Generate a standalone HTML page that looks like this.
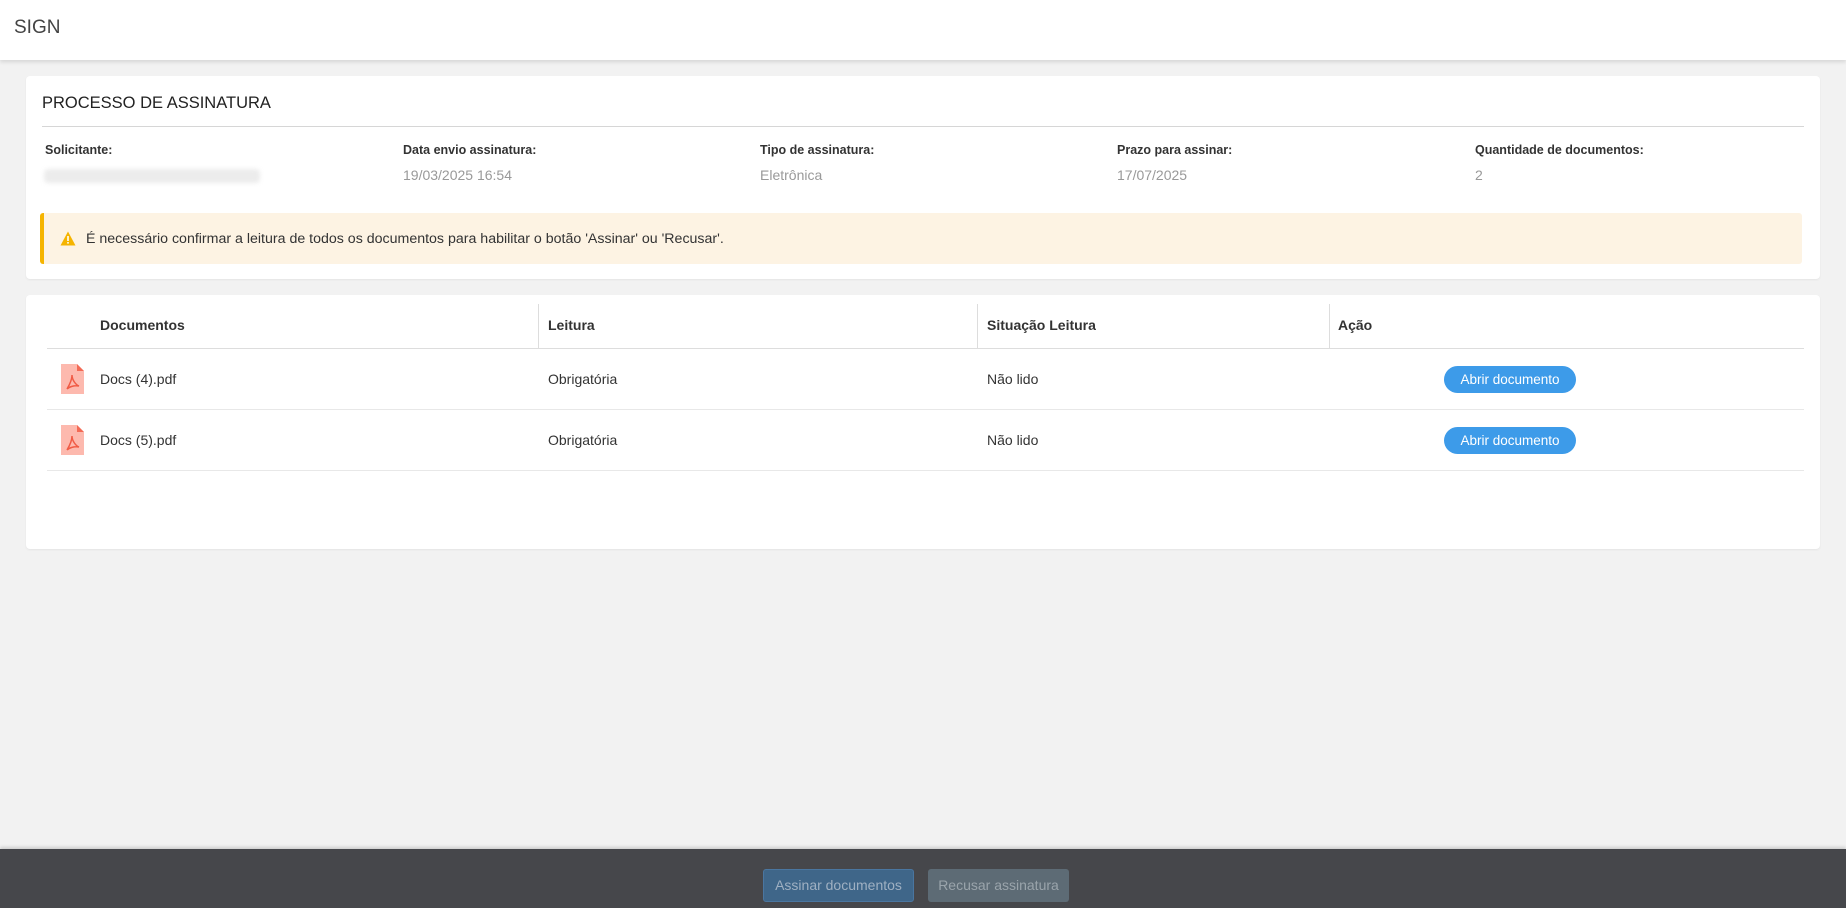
<!DOCTYPE html>
<html><head><meta charset="utf-8"><style>
*{margin:0;padding:0;box-sizing:border-box}
body{width:1846px;height:908px;background:#f2f2f2;font-family:"Liberation Sans",sans-serif;color:#333;position:relative;overflow:hidden;font-size:14px}
.abs{position:absolute}
.hdr{left:0;top:0;width:1846px;height:60px;background:#fff;box-shadow:0 2px 4px rgba(0,0,0,.12)}
.card{background:#fff;border-radius:4px;box-shadow:0 1px 2px rgba(0,0,0,.06)}
.lbl{font-size:12.5px;font-weight:bold;color:#333;top:143px}
.val{font-size:14px;color:#999;top:167px}
.th{font-size:14px;font-weight:bold;color:#333;top:317px}
.td{font-size:14px;color:#333}
.vd{width:1px;background:#ddd;top:304px;height:44px}
.hl{height:1px;background:#ddd}
.btn{background:#3d9be9;color:#fff;border-radius:14px;font-size:13.5px;text-align:center;line-height:27px;width:132px;height:27px;left:1444px}
</style></head><body>
<div class="abs hdr"></div>
<div class="abs" style="left:14px;top:17px;font-size:19px;color:#444">SIGN</div>

<div class="abs card" style="left:26px;top:76px;width:1794px;height:203px"></div>
<div class="abs" style="left:42px;top:94px;font-size:16.5px;color:#222">PROCESSO DE ASSINATURA</div>
<div class="abs hl" style="left:42px;top:126px;width:1762px;background:#d6d6d6"></div>
<div class="abs lbl" style="left:45px">Solicitante:</div>
<div class="abs lbl" style="left:403px">Data envio assinatura:</div>
<div class="abs lbl" style="left:760px">Tipo de assinatura:</div>
<div class="abs lbl" style="left:1117px">Prazo para assinar:</div>
<div class="abs lbl" style="left:1475px">Quantidade de documentos:</div>
<div class="abs" style="left:44px;top:169px;width:216px;height:14px;background:#ececec;filter:blur(2px);border-radius:4px"></div>
<div class="abs val" style="left:403px">19/03/2025 16:54</div>
<div class="abs val" style="left:760px">Eletrônica</div>
<div class="abs val" style="left:1117px">17/07/2025</div>
<div class="abs val" style="left:1475px">2</div>

<div class="abs" style="left:40px;top:213px;width:1762px;height:51px;background:#fdf3e3;border-left:4px solid #f5b400;border-radius:3px"></div>
<svg class="abs" style="left:60px;top:231px" width="16" height="15" viewBox="0 0 16 15"><path d="M8 0.5L15.5 14.5H0.5Z" fill="#f5b400"/><rect x="7.2" y="5" width="1.6" height="5" fill="#fff"/><rect x="7.2" y="11" width="1.6" height="1.6" fill="#fff"/></svg>
<div class="abs" style="left:86px;top:231px;font-size:14.2px;color:#333">É necessário confirmar a leitura de todos os documentos para habilitar o botão 'Assinar' ou 'Recusar'.</div>

<div class="abs card" style="left:26px;top:295px;width:1794px;height:254px"></div>
<div class="abs th" style="left:100px">Documentos</div>
<div class="abs th" style="left:548px">Leitura</div>
<div class="abs th" style="left:987px">Situação Leitura</div>
<div class="abs th" style="left:1338px">Ação</div>
<div class="abs vd" style="left:538px"></div>
<div class="abs vd" style="left:977px"></div>
<div class="abs vd" style="left:1329px"></div>
<div class="abs hl" style="left:47px;top:348px;width:1757px"></div>
<div class="abs hl" style="left:47px;top:409px;width:1757px;background:#e8e8e8"></div>
<div class="abs hl" style="left:47px;top:470px;width:1757px;background:#e8e8e8"></div>

<svg class="abs" style="left:61px;top:364px" width="24" height="30" viewBox="0 0 24 30"><path d="M0 0H16L23 7V30H0Z" fill="#fdb9ae"/><path d="M16 0L23 7H16Z" fill="#f36a55"/><path d="M6 25C9 20 11 15 11 11M11 11C11 16 15 21 18 22C13 21 8 23 6 25" stroke="#f05b45" stroke-width="1.5" fill="none"/></svg>
<svg class="abs" style="left:61px;top:425px" width="24" height="30" viewBox="0 0 24 30"><path d="M0 0H16L23 7V30H0Z" fill="#fdb9ae"/><path d="M16 0L23 7H16Z" fill="#f36a55"/><path d="M6 25C9 20 11 15 11 11M11 11C11 16 15 21 18 22C13 21 8 23 6 25" stroke="#f05b45" stroke-width="1.5" fill="none"/></svg>
<div class="abs td" style="left:100px;top:371px">Docs (4).pdf</div>
<div class="abs td" style="left:548px;top:371px">Obrigatória</div>
<div class="abs td" style="left:987px;top:371px">Não lido</div>
<div class="abs btn" style="top:366px">Abrir documento</div>
<div class="abs td" style="left:100px;top:432px">Docs (5).pdf</div>
<div class="abs td" style="left:548px;top:432px">Obrigatória</div>
<div class="abs td" style="left:987px;top:432px">Não lido</div>
<div class="abs btn" style="top:427px">Abrir documento</div>

<div class="abs" style="left:0;top:849px;width:1846px;height:59px;background:#46474b;box-shadow:0 -2px 3px rgba(0,0,0,.15)"></div>
<div class="abs" style="left:763px;top:869px;width:151px;height:33px;background:#3f6689;border:1px solid #4a76a0;border-radius:3px;color:#9fb0c2;font-size:14px;text-align:center;line-height:31px">Assinar documentos</div>
<div class="abs" style="left:928px;top:869px;width:141px;height:33px;background:#5d6b75;border-radius:3px;color:#9aa4ab;font-size:14px;text-align:center;line-height:33px">Recusar assinatura</div>
</body></html>
